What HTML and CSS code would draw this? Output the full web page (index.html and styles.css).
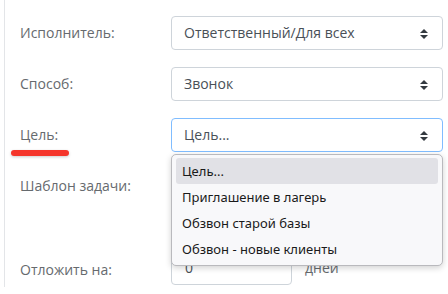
FILE: index.html
```html
<!DOCTYPE html>
<html>
<head>
    <title>Задача</title>
    <link rel="stylesheet" href="styles.css">
</head>
<body>
    <div class="panel">
        <div class="row">
            <label class="label">Исполнитель:</label>
            <div class="field">
                <div class="select">Ответственный/Для всех<span class="arrows"></span></div>
            </div>
        </div>

        <div class="row">
            <label class="label">Способ:</label>
            <div class="field">
                <div class="select">Звонок<span class="arrows"></span></div>
            </div>
        </div>

        <div class="row">
            <label class="label">Цель:</label>
            <span class="mark"></span>
            <div class="field">
                <div class="select focus">Цель...<span class="arrows"></span></div>
                <ul class="dropdown">
                    <li class="active">Цель...</li>
                    <li>Приглашение в лагерь</li>
                    <li>Обзвон старой базы</li>
                    <li>Обзвон - новые клиенты</li>
                </ul>
            </div>
        </div>

        <div class="row tall">
            <label class="label">Шаблон задачи:</label>
            <div class="field">
                <div class="select"><span class="arrows"></span></div>
            </div>
        </div>

        <div class="row">
            <label class="label low">Отложить на:</label>
            <div class="field inline">
                <div class="input">0</div>
                <span class="unit">дней</span>
            </div>
        </div>
    </div>
</body>
</html>
```

FILE: styles.css
```css
body {
    margin: 0;
    background-color: #fff;
    font-family: 'Open Sans', 'Liberation Sans', sans-serif;
    font-size: 14px;
}

.panel {
    margin-left: 4px;
    border-left: 1px solid #e3e5e8;
    padding: 16px 5px 5px 15px;
    height: 266px;
    overflow: hidden;
}

.row {
    position: relative;
    display: grid;
    grid-template-columns: 151px 272px;
    margin-bottom: 17px;
}

.row.tall {
    margin-bottom: 45px;
}

.label {
    color: #666a6e;
    line-height: 34px;
}

.label.low {
    padding-top: 5px;
}

.field {
    position: relative;
}

.field.inline {
    display: flex;
    align-items: center;
}

.select {
    position: relative;
    height: 34px;
    box-sizing: border-box;
    border: 1px solid #ced4da;
    border-radius: 4px;
    padding: 0 12px;
    line-height: 32px;
    color: #495057;
}

.select.focus {
    border-color: #80bdff;
}

.arrows {
    position: absolute;
    right: 14px;
    top: 12px;
    width: 0;
    height: 0;
    border-left: 4px solid transparent;
    border-right: 4px solid transparent;
    border-bottom: 4px solid #343a40;
}

.arrows::after {
    content: '';
    position: absolute;
    left: -4px;
    top: 6px;
    border-left: 4px solid transparent;
    border-right: 4px solid transparent;
    border-top: 4px solid #343a40;
}

.mark {
    position: absolute;
    left: -9px;
    top: 32px;
    width: 58px;
    height: 6px;
    border-radius: 3px;
    background-color: #f5352b;
    box-shadow: 0 1px 3px rgba(0, 0, 0, 0.2);
}

.dropdown {
    position: absolute;
    top: 36px;
    left: 0;
    right: 0;
    z-index: 2;
    margin: 0;
    padding: 3px 4px 3px 4px;
    list-style: none;
    background-color: #f8f8fa;
    border: 1px solid #b9b9bd;
    border-radius: 5px;
    box-shadow: 0 2px 6px rgba(0, 0, 0, 0.18);
    font-family: 'Noto Sans', sans-serif;
    font-size: 13px;
    color: #1a1a1a;
}

.dropdown li {
    height: 26px;
    line-height: 26px;
    padding: 0 6px;
    border-radius: 3px;
}

.dropdown li.active {
    background-color: #e1e1e6;
}

.input {
    width: 121px;
    height: 34px;
    box-sizing: border-box;
    border: 1px solid #ced4da;
    border-radius: 4px;
    padding: 0 13px;
    line-height: 32px;
    color: #495057;
}

.unit {
    margin-left: 13px;
    color: #666a6e;
}
```
